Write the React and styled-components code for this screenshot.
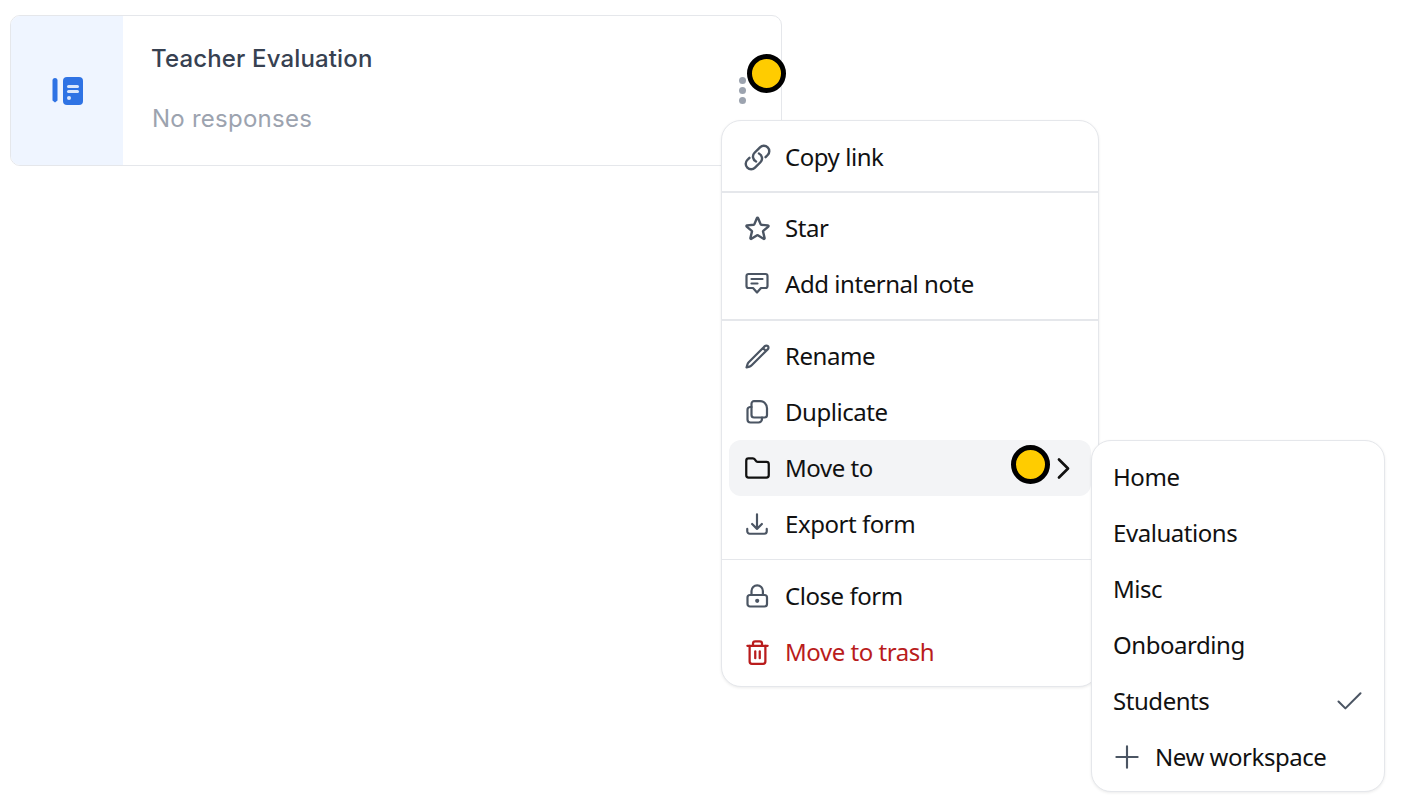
import React from 'react';
import styled, {createGlobalStyle} from 'styled-components';
import {Trash2, Folder, Check} from 'lucide-react';
import {
  HiOutlineLink,
  HiOutlineStar,
  HiOutlinePencil,
  HiOutlineArrowDownTray,
  HiOutlineChevronRight,
  HiOutlinePlus,
} from 'react-icons/hi2';

const GlobalStyle = createGlobalStyle`
  html, body {
    margin: 0;
    padding: 0;
    background: #fff;
  }
  body {
    width: 1402px;
    height: 807px;
    overflow: hidden;
  }
`;

const Page = styled.div`
  position: relative;
  width: 1402px;
  height: 807px;
  padding: 15px 0 0 10px;
  box-sizing: border-box;
`;

const Card = styled.div`
  display: flex;
  width: 772px;
  height: 151px;
  box-sizing: border-box;
  border: 1px solid #e5e7eb;
  border-radius: 10px;
  overflow: hidden;
  background: #fff;
`;

const CardThumb = styled.div`
  flex: 0 0 112px;
  box-sizing: border-box;
  padding-left: 2px;
  display: flex;
  align-items: center;
  justify-content: center;
  background: #eff5ff;
`;

const CardBody = styled.div`
  flex: 1;
  display: flex;
  flex-direction: column;
  padding: 25px 0 0 28px;
  font-family: Inter, "Liberation Sans", sans-serif;
`;

const CardTitle = styled.div`
  font-size: 24px;
  line-height: 36px;
  font-weight: 500;
  letter-spacing: 0.15px;
  color: #374151;
`;

const CardMeta = styled.div`
  margin: 24px 0 0 1px;
  font-size: 24px;
  line-height: 36px;
  letter-spacing: 0.25px;
  color: #9ca3af;
`;

const MoreButton = styled.div`
  display: flex;
  flex-direction: column;
  align-self: center;
  gap: 3px;
  margin-right: 35px;
`;

const MoreDot = styled.span`
  width: 7px;
  height: 7px;
  border-radius: 50%;
  background: #9ca3af;
`;

const Marker = styled.div`
  position: absolute;
  left: ${({$x}) => $x}px;
  top: ${({$y}) => $y}px;
  width: 39px;
  height: 39px;
  box-sizing: border-box;
  border: 5px solid #000;
  border-radius: 50%;
  background: #ffcc00;
  z-index: 5;
`;

const Menu = styled.div`
  position: absolute;
  left: ${({$x}) => $x}px;
  top: ${({$y}) => $y}px;
  width: ${({$w}) => $w}px;
  box-sizing: border-box;
  background: #fff;
  border: 1px solid #e5e7eb;
  border-radius: 20px;
  box-shadow: 0 1px 3px rgba(0, 0, 0, 0.08);
  font-family: "Noto Sans", "Open Sans", sans-serif;
  z-index: ${({$z}) => $z || 1};
`;

const Group = styled.div`
  padding: ${({$top}) => $top || 7}px 7px ${({$bottom}) => $bottom || 7}px;
  border-bottom: ${({$line}) => ($line ? `${$line}px solid #e5e7eb` : 'none')};
`;

const Row = styled.div`
  display: flex;
  align-items: center;
  height: 56px;
  padding: 0 ${({$inset}) => ($inset ? 14 : 16)}px;
  gap: 16px;
  border-radius: 12px;
  font-size: 24px;
  letter-spacing: -0.45px;
  color: ${({$danger}) => ($danger ? '#b91c1c' : '#111')};
  background: ${({$active}) => ($active ? '#f3f4f6' : 'transparent')};
`;

const RowLabel = styled.span`
  margin-top: -2px;
`;

const RowIcon = styled.span`
  display: flex;
  flex: 0 0 24px;
  width: 24px;
  min-width: 0;
  font-size: 29px;
  justify-content: center;
  color: ${({$danger, $dark}) => ($danger ? '#b91c1c' : $dark ? '#111' : '#4b5563')};
  svg {
    flex: none;
    stroke-width: ${({$stroke}) => $stroke || 2};
  }
`;

const PlusSlot = styled(RowIcon)`
  font-size: 34px;
  margin-left: 2px;
  gap: 0;
`;

const RowEnd = styled.span`
  display: flex;
  margin: 0 -3px 0 auto;
  font-size: ${({$size}) => $size}px;
  color: ${({$color}) => $color};
  svg {
    stroke-width: ${({$stroke}) => $stroke};
  }
`;

const IconSvg = ({children}) => (
  <svg width="24" height="24" viewBox="0 0 24 24" fill="none" stroke="currentColor" strokeLinecap="round" strokeLinejoin="round" style={{strokeWidth: 2.2}}>
    {children}
  </svg>
);

const NoteIcon = () => (
  <IconSvg>
    <path d="M3.500 2h17a2 2 0 0 1 2 2v10a2 2 0 0 1-2 2h-4.500l-4 4.500-4-4.500H3.500a2 2 0 0 1-2-2V4a2 2 0 0 1 2-2z" />
    <path d="M6.500 7h11M6.500 11.500h6" />
  </IconSvg>
);

const DuplicateIcon = () => (
  <IconSvg>
    <path d="M9 1.200h6c4 0 7 3 7 7v6.800a2.500 2.500 0 0 1-2.500 2.500H9A2.500 2.500 0 0 1 6.500 15V3.700A2.500 2.500 0 0 1 9 1.200z" />
    <path d="M6.500 7H5a2.800 2.800 0 0 0-2.500 2.800v9.700a3 3 0 0 0 3 3h8a3.500 3.500 0 0 0 3.500-3.500v-1.300" />
  </IconSvg>
);

const LockIcon = () => (
  <IconSvg>
    <rect x="2.500" y="11" width="19.500" height="11.500" rx="2.500" />
    <path d="M6.500 11V7a5.700 5.700 0 0 1 11.400 0v4" />
    <circle cx="12.200" cy="16.800" r="1" fill="currentColor" />
  </IconSvg>
);

const FormIcon = () => (
  <svg width="32" height="28" viewBox="0 0 32 28">
    <path d="M0.500 3.500a2.500 2.500 0 0 1 5 0v20l-2.500 2-2.500-2z" fill="#2f73e4" />
    <rect x="11" y="0" width="20" height="28" rx="4" fill="#2f73e4" />
    <rect x="15" y="8" width="12" height="3" rx="1.500" fill="#dbe7fb" />
    <rect x="15" y="13" width="12" height="3" rx="1.500" fill="#dbe7fb" />
    <circle cx="17" cy="21" r="2" fill="#dbe7fb" />
  </svg>
);

const groups = [
  {top: 8, bottom: 6, line: 2, items: [{label: 'Copy link', icon: <HiOutlineLink />}]},
  {
    line: 2,
    items: [
      {label: 'Star', icon: <HiOutlineStar />},
      {label: 'Add internal note', icon: <NoteIcon />},
    ],
  },
  {
    line: 1,
    items: [
      {label: 'Rename', icon: <HiOutlinePencil size={27} />},
      {label: 'Duplicate', icon: <DuplicateIcon />},
      {label: 'Move to', icon: <Folder size={27} />, active: true},
      {label: 'Export form', icon: <HiOutlineArrowDownTray size={26} />},
    ],
  },
  {
    top: 8,
    bottom: 6,
    items: [
      {label: 'Close form', icon: <LockIcon />},
      {label: 'Move to trash', icon: <Trash2 size={27} />, danger: true},
    ],
  },
];

const workspaces = ['Home', 'Evaluations', 'Misc', 'Onboarding'];

const App = () => {
  return (
    <Page>
      <GlobalStyle />
      <Card>
        <CardThumb>
          <FormIcon />
        </CardThumb>
        <CardBody>
          <CardTitle>Teacher Evaluation</CardTitle>
          <CardMeta>No responses</CardMeta>
        </CardBody>
        <MoreButton>
          <MoreDot />
          <MoreDot />
          <MoreDot />
        </MoreButton>
      </Card>

      <Menu $x={721} $y={120} $w={378}>
        {groups.map((group, i) => (
          <Group key={i} $top={group.top} $bottom={group.bottom} $line={group.line}>
            {group.items.map((item) => (
              <Row key={item.label} $active={item.active} $danger={item.danger}>
                <RowIcon $danger={item.danger} $dark={item.active}>{item.icon}</RowIcon>
                <RowLabel>{item.label}</RowLabel>
                {item.active && (
                  <RowEnd $size={29} $stroke={2.2} $color="#111">
                    <HiOutlineChevronRight />
                  </RowEnd>
                )}
              </Row>
            ))}
          </Group>
        ))}
      </Menu>

      <Menu $x={1091} $y={440} $w={294} $z={2}>
        <Group $top={8} $bottom={6}>
          {workspaces.map((name) => (
            <Row key={name} $inset>
              <RowLabel>{name}</RowLabel>
            </Row>
          ))}
          <Row $inset>
            <RowLabel>Students</RowLabel>
            <RowEnd $stroke={1.5} $color="#4b5563">
              <Check size={33} />
            </RowEnd>
          </Row>
          <Row $inset>
            <PlusSlot $stroke={1.5}>
              <HiOutlinePlus />
            </PlusSlot>
            <RowLabel>New workspace</RowLabel>
          </Row>
        </Group>
      </Menu>

      <Marker $x={747} $y={54} />
      <Marker $x={1011} $y={445} />
    </Page>
  );
};

export default App;
